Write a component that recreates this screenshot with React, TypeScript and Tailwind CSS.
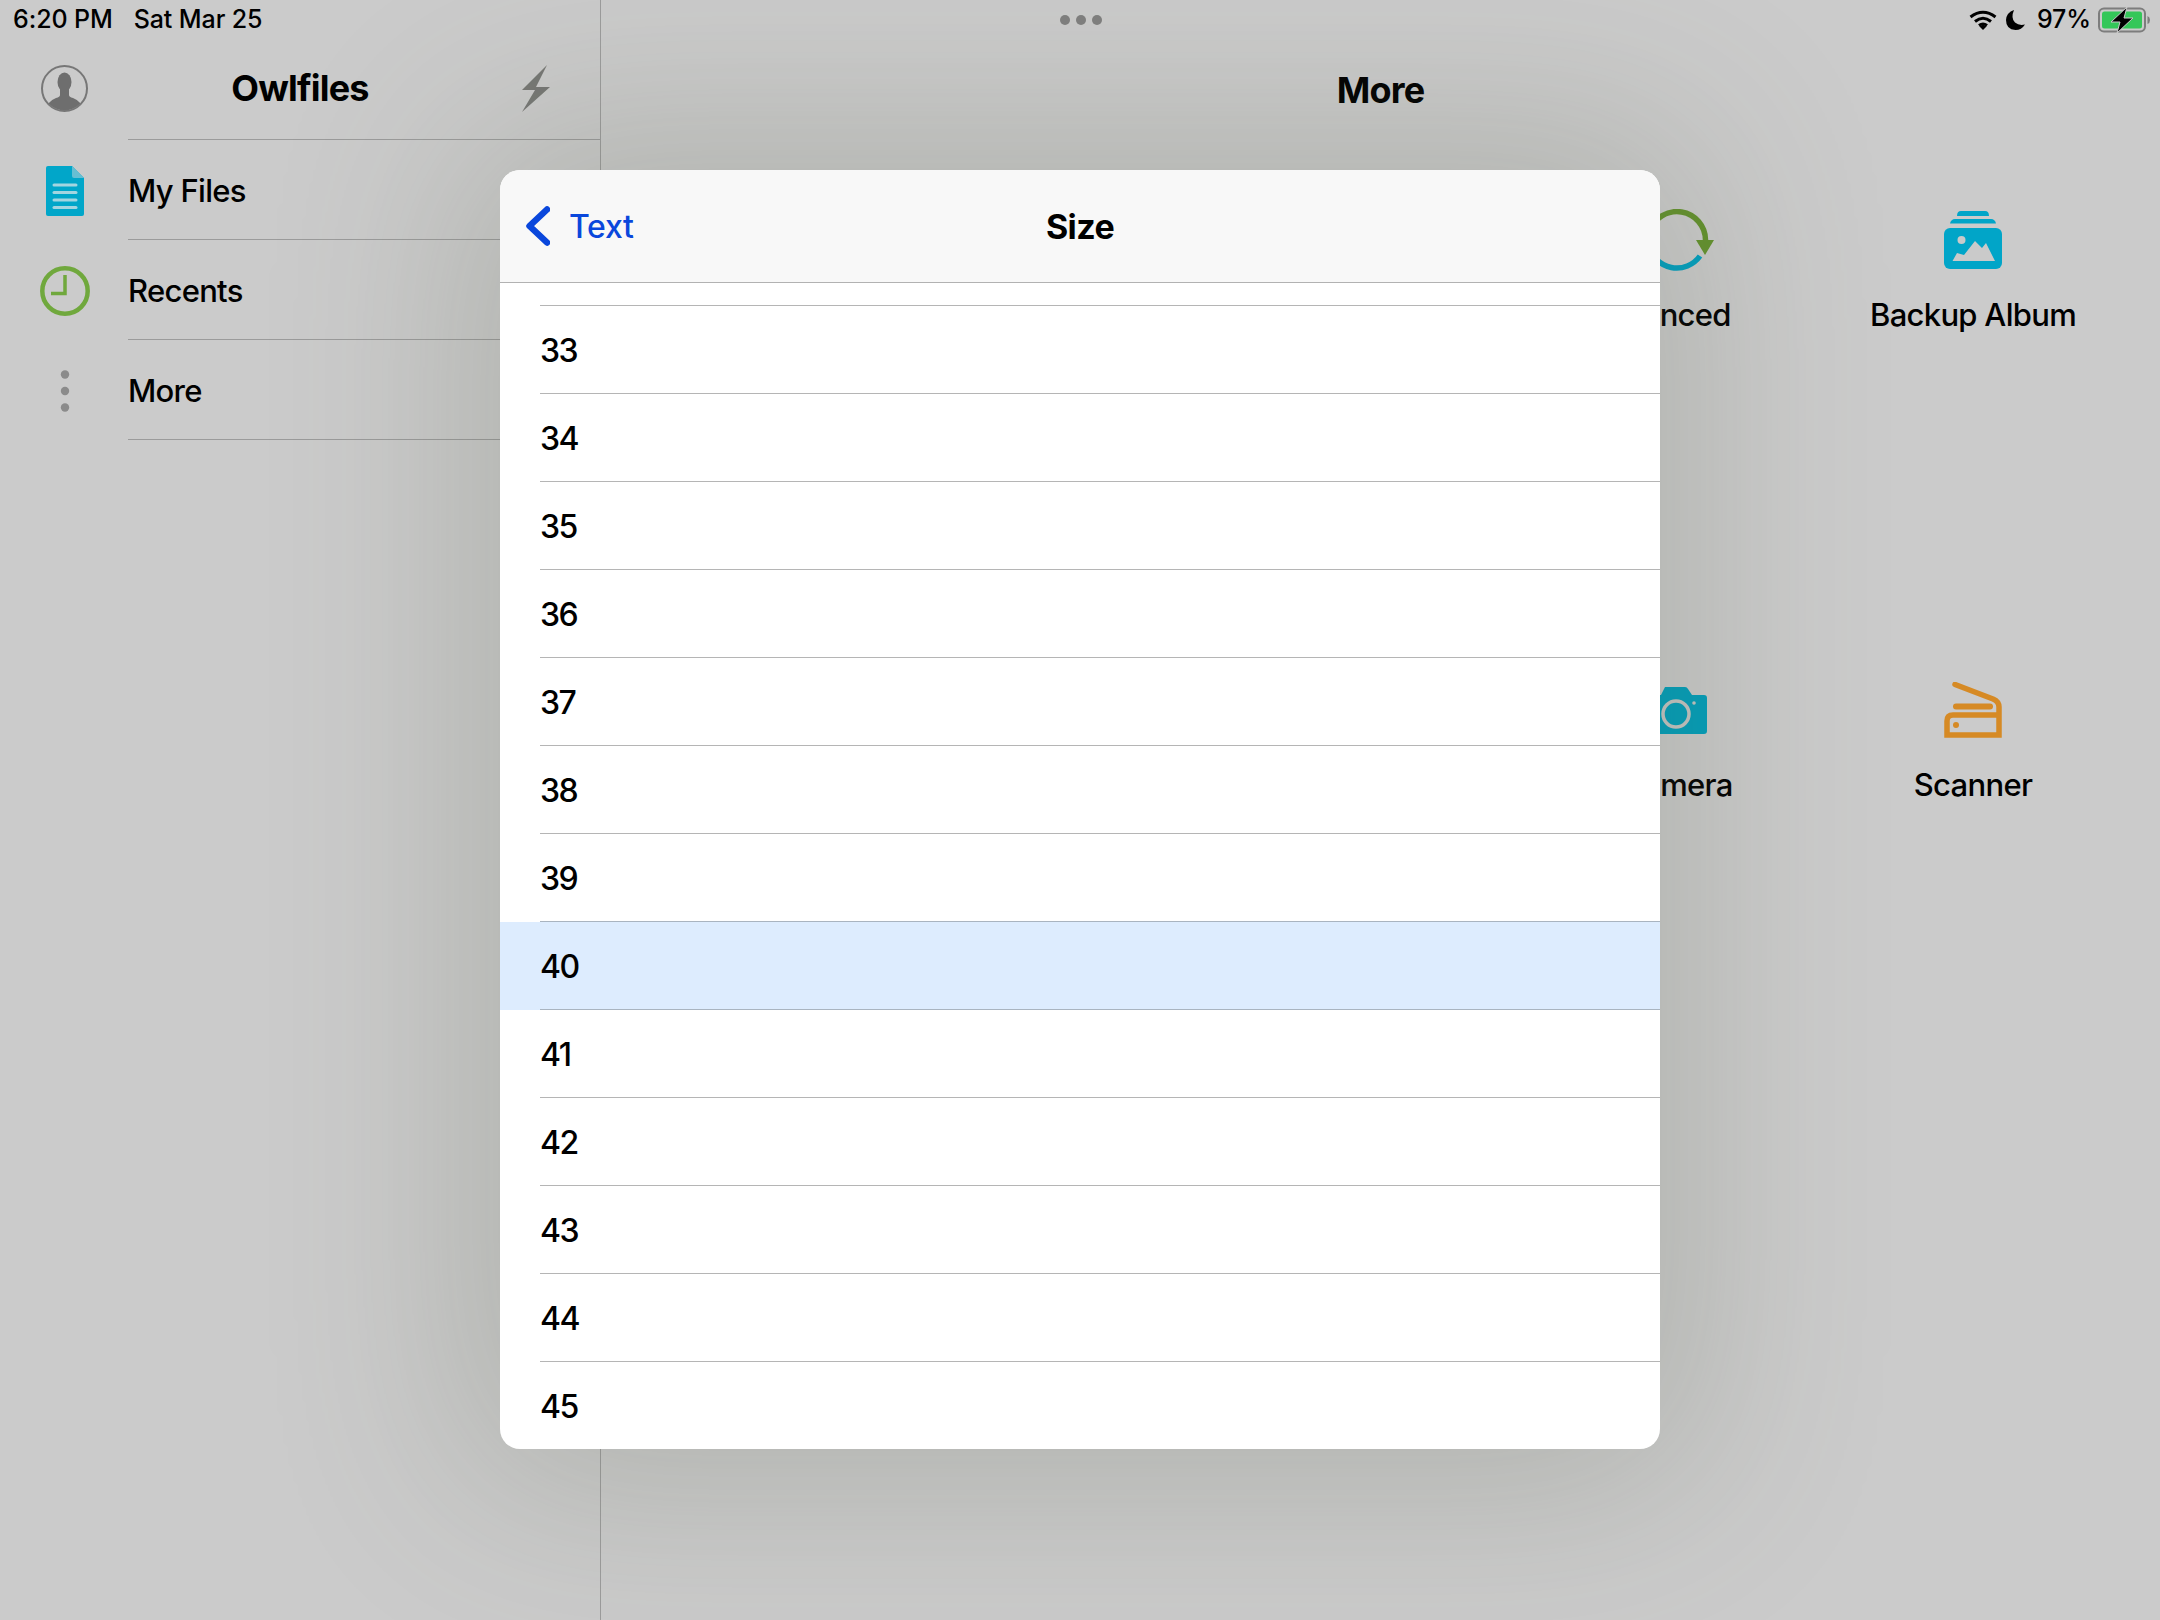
const sizes = [33, 34, 35, 36, 37, 38, 39, 40, 41, 42, 43, 44, 45];

function ProfileIcon() {
  return (
    <svg width="47" height="47" viewBox="0 0 47 47">
      <clipPath id="profile-clip">
        <circle cx="23.5" cy="23.5" r="22" />
      </clipPath>
      <g clipPath="url(#profile-clip)" fill="#6e6e6e">
        <ellipse cx="23.5" cy="17" rx="7" ry="9.5" />
        <path d="M19 24 H28 V30 Q28 32 32 33 Q41 36 42 47 H5 Q6 36 15 33 Q19 32 19 30 Z" />
      </g>
      <circle cx="23.5" cy="23.5" r="22.5" fill="none" stroke="#777777" strokeWidth="2" />
    </svg>
  );
}

function BoltIcon() {
  return (
    <svg width="28" height="47" viewBox="0 0 28 47">
      <polygon points="25,0 0,25 13,25 0,47 28,22 14,22" fill="#777875" />
    </svg>
  );
}

function DocIcon() {
  return (
    <svg width="38" height="50" viewBox="0 0 38 50">
      <path d="M2 0 H26 L38 12 V48 Q38 50 36 50 H2 Q0 50 0 48 V2 Q0 0 2 0 Z" fill="#01a6c9" />
      <path d="M26 0 L38 12 H28 Q26 12 26 10 Z" fill="#66bfd3" />
      <g stroke="#a3d5e0" strokeWidth="3" strokeLinecap="round">
        <line x1="8" y1="19" x2="30" y2="19" />
        <line x1="8" y1="26.5" x2="30" y2="26.5" />
        <line x1="8" y1="34" x2="30" y2="34" />
        <line x1="8" y1="41.5" x2="30" y2="41.5" />
      </g>
    </svg>
  );
}

function ClockIcon() {
  return (
    <svg width="50" height="50" viewBox="0 0 50 50" fill="none" stroke="#70a83d">
      <circle cx="25" cy="25" r="22.7" strokeWidth="4.5" />
      <path d="M25 9 V27.5 H11" strokeWidth="3.5" />
    </svg>
  );
}

function DotsIcon() {
  return (
    <svg width="10" height="42" viewBox="0 0 10 42" fill="#8b8b8b">
      <circle cx="5" cy="4.5" r="4.2" />
      <circle cx="5" cy="21" r="4.2" />
      <circle cx="5" cy="37.5" r="4.2" />
    </svg>
  );
}

function SyncIcon() {
  return (
    <svg width="74" height="62" viewBox="0 0 74 62" fill="none" strokeWidth="5.5">
      <path d="M10 22 A28.5 28.5 0 0 1 65.5 31" stroke="#64922e" />
      <polygon points="56,31 74,31 65,46" fill="#64922e" />
      <path d="M60 47 A28.5 28.5 0 0 1 9 37" stroke="#01a0c0" />
    </svg>
  );
}

function AlbumIcon() {
  return (
    <svg width="58" height="58" viewBox="0 0 58 58">
      <path d="M13 5 Q13 0 17 0 H41 Q45 0 45 5 Z" fill="#01a5c8" />
      <path d="M6 12.5 Q7 8 11 8 H47 Q51 8 52 12.5 Z" fill="#01a5c8" />
      <rect x="0" y="17" width="58" height="41" rx="6" fill="#01a5c8" />
      <circle cx="17.5" cy="29" r="4" fill="#cacaca" />
      <polygon points="8.5,50 13,42 20,44 31,30 38,37 42,32 51,50" fill="#cacaca" />
    </svg>
  );
}

function CameraIcon() {
  return (
    <svg width="60" height="47" viewBox="0 0 60 47">
      <path
        d="M3 8 H14 L18 0 H38 Q40 0 41 2 L45 8 H57 Q60 8 60 11 V44 Q60 47 57 47 H3 Q0 47 0 44 V11 Q0 8 3 8 Z"
        fill="#019fbb"
      />
      <circle cx="29" cy="27" r="13" fill="none" stroke="#c6c6c4" strokeWidth="3.5" />
      <circle cx="47" cy="16" r="1.8" fill="#c6c6c4" />
    </svg>
  );
}

function ScannerIcon() {
  return (
    <svg width="58" height="56" viewBox="0 0 58 56" fill="none" stroke="#d68a25">
      <path d="M11 2.5 L49 17 Q55 19.5 55 25 V53 H3 V39 Q3 33 9 33 H55" strokeWidth="5.5" strokeLinecap="round" />
      <line x1="12" y1="24.5" x2="46" y2="24.5" strokeWidth="6" strokeLinecap="round" />
      <circle cx="12" cy="43" r="3" fill="#d68a25" stroke="none" />
    </svg>
  );
}

function WifiIcon() {
  return (
    <svg width="28" height="20" viewBox="0 0 28 20" fill="none" stroke="#000000" strokeWidth="3">
      <path d="M1.5 7 Q14 -2.5 26.5 7" />
      <path d="M6 11.5 Q14 5 22 11.5" />
      <path d="M10 15.5 Q14 12.5 18 15.5" />
      <polygon points="14,20 10.5,16.5 14,14.5 17.5,16.5" fill="#000000" stroke="none" />
    </svg>
  );
}

function MoonIcon() {
  return (
    <svg width="19" height="20" viewBox="0 0 19 20">
      <path d="M8 0 Q4.5 8 9 12.5 Q13 16 19 14.5 Q15.5 20 9.5 20 Q0 19.5 0 10 Q0.5 2.5 8 0 Z" fill="#000000" />
    </svg>
  );
}

function BatteryIcon() {
  return (
    <svg width="52" height="26" viewBox="0 0 52 26">
      <rect x="1" y="1.5" width="46" height="23" rx="5" fill="none" stroke="#7d7d7d" strokeWidth="2" />
      <rect x="4" y="4.5" width="40" height="17" rx="2.5" fill="#34c759" />
      <path d="M49.5 9 Q52 10 52 13 Q52 16 49.5 17 Z" fill="#7d7d7d" />
      <polygon points="29,0 13,15 22,15 19,26 35,11 26,11" fill="#000000" stroke="#cacaca" strokeWidth="1" />
    </svg>
  );
}

function StatusBar() {
  return (
    <div className="absolute left-0 top-0 grid h-[39px] w-full grid-cols-3 items-center pl-[13px] pr-[10px] text-[25px] font-medium tracking-[-0.1px] text-black">
      <div className="flex gap-[21px]">
        <span>6:20 PM</span>
        <span>Sat Mar 25</span>
      </div>
      <div className="flex justify-center gap-[6px]">
        <span className="h-[10px] w-[10px] rounded-full bg-[#7f7f7f]" />
        <span className="h-[10px] w-[10px] rounded-full bg-[#7f7f7f]" />
        <span className="h-[10px] w-[10px] rounded-full bg-[#7f7f7f]" />
      </div>
      <div className="flex items-center justify-end">
        <WifiIcon />
        <span className="ml-[9px]">
          <MoonIcon />
        </span>
        <span className="ml-[12px] mr-[7px]">97%</span>
        <BatteryIcon />
      </div>
    </div>
  );
}

function SideRow({ icon, label }: { icon: React.ReactNode; label: string }) {
  return (
    <div className="flex h-[100px] items-center">
      <div className="flex w-[128px] justify-center pl-px pt-[2px]">{icon}</div>
      <div className="flex h-full flex-1 items-center border-b border-[#9b9b9b] pt-[3px] text-[31px] font-medium tracking-[-0.7px] text-black">
        {label}
      </div>
    </div>
  );
}

function Tile({ icon, label }: { icon: React.ReactNode; label: string }) {
  return (
    <div className="flex flex-col items-center">
      <div className="flex h-[62px] items-center justify-center">{icon}</div>
      <div className="mt-[24px] text-[31px] leading-[40px] font-medium tracking-[-0.7px] text-black">{label}</div>
    </div>
  );
}

export default function App() {
  return (
    <div className="relative flex h-[1620px] w-[2160px] overflow-hidden bg-[#cbcbcb] font-['Inter',sans-serif]">
      <aside className="h-full w-[601px] border-r border-[#9c9c9c] pt-[40px]">
        <div className="grid h-[99px] grid-cols-[128px_1fr_128px] items-center pb-[3px]">
          <div className="flex justify-center">
            <ProfileIcon />
          </div>
          <div className="text-center text-[36px] font-bold tracking-[-0.8px] text-black">Owlfiles</div>
          <div className="flex justify-center">
            <BoltIcon />
          </div>
        </div>
        <div className="ml-[128px] h-px bg-[#9b9b9b]" />
        <SideRow icon={<DocIcon />} label="My Files" />
        <SideRow icon={<ClockIcon />} label="Recents" />
        <SideRow icon={<DotsIcon />} label="More" />
      </aside>

      <main className="flex flex-1 flex-col pt-[40px]">
        <div className="flex h-[100px] items-center justify-center text-[36px] font-bold tracking-[-0.8px] text-black">More</div>
        <div className="mt-[69px] grid auto-rows-[470px] grid-cols-[296px_296px] justify-end pr-[39px]">
          <Tile icon={<SyncIcon />} label="Synced" />
          <Tile icon={<AlbumIcon />} label="Backup Album" />
          <Tile icon={<CameraIcon />} label="Camera" />
          <Tile icon={<ScannerIcon />} label="Scanner" />
        </div>
      </main>

      <StatusBar />

      {/* size picker sheet */}
      <div className="absolute left-[500px] top-[170px] flex h-[1279px] w-[1160px] flex-col overflow-hidden rounded-[20px] bg-white shadow-[0_0_200px_30px_rgba(80,90,70,0.23)]">
        <div className="relative flex h-[113px] shrink-0 items-center justify-center border-b border-[#b2b2b2] bg-[#f8f8f8]">
          <div className="absolute left-[26px] flex items-center gap-[19px] text-[32px] font-medium text-[#0a47dc]">
            <svg width="24" height="40" viewBox="0 0 24 40" fill="none" stroke="#0a47dc" strokeWidth="6.5" strokeLinecap="round" strokeLinejoin="round">
              <polyline points="21,3.5 3.5,20 21,36.5" />
            </svg>
            <span className="pt-[2px] tracking-[-0.3px]">Text</span>
          </div>
          <div className="text-[34px] font-bold tracking-[-0.6px] text-black">Size</div>
        </div>
        <div className="ml-[40px] h-[23px] shrink-0 border-b border-[#b5b5b5]" />
        {sizes.map((size) => (
          <div key={size} className={`h-[88px] shrink-0 ${size === 40 ? "bg-[#ddecfe]" : ""}`}>
            <div
              className={`ml-[40px] flex h-full items-center pt-[2px] text-[32px] font-medium tracking-[-1.5px] text-black ${
                size === 45 ? "" : size === 39 || size === 40 ? "border-b border-[#a9b4c0]" : "border-b border-[#b5b5b5]"
              }`}
            >
              {size}
            </div>
          </div>
        ))}
      </div>
    </div>
  );
}
